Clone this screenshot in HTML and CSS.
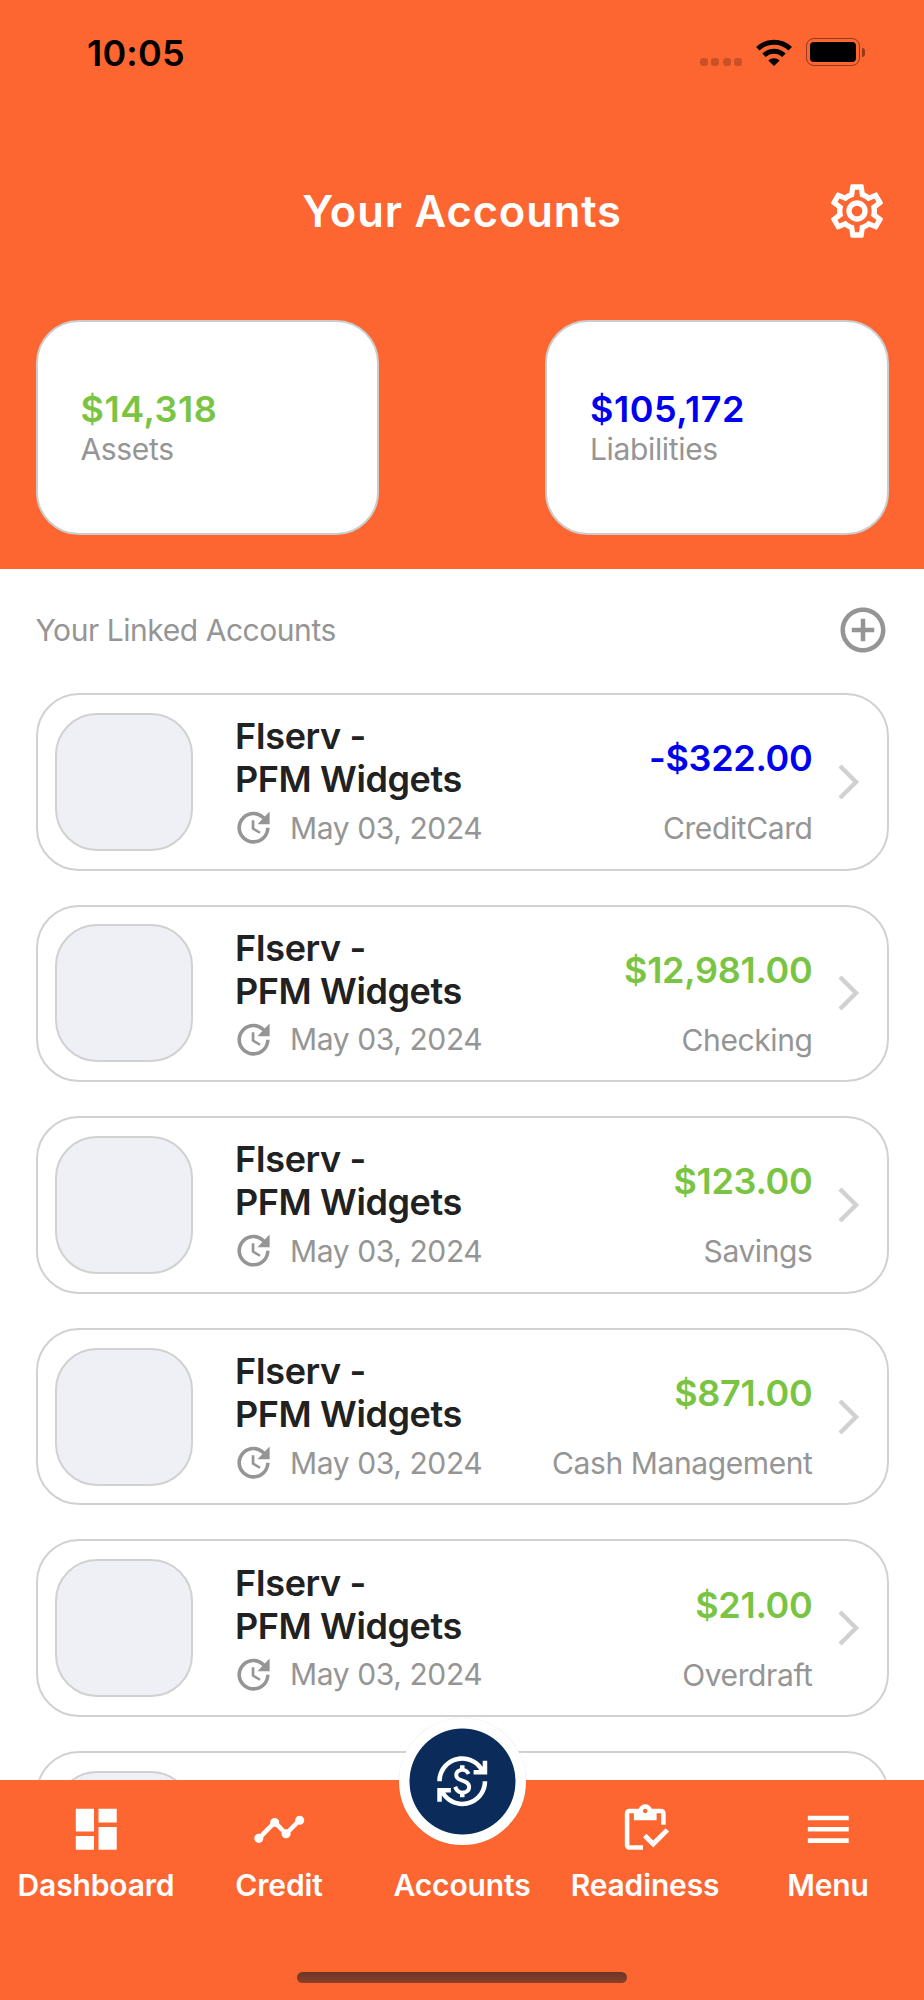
FILE: index.html
```html
<!DOCTYPE html>
<html lang="en">
<head>
    <meta charset="UTF-8">
    <meta name="viewport" content="width=device-width, initial-scale=1.0">
    <title>Your Accounts</title>
    <link rel="stylesheet" href="styles.css">
</head>
<body>
    <!-- shared icons -->
    <svg class="sprite">
        <symbol id="update" viewBox="0 0 24 24"><path d="M21,10.12H14.22L16.96,7.3C14.23,4.6 9.81,4.5 7.08,7.2C4.35,9.91 4.35,14.28 7.08,17C9.81,19.7 14.23,19.7 16.96,17C18.32,15.65 19,14.08 19,12.1H21C21,14.08 20.12,16.65 18.36,18.39C14.85,21.87 9.15,21.87 5.64,18.39C2.14,14.92 2.11,9.28 5.62,5.81C9.13,2.34 14.76,2.34 18.27,5.81L21,3V10.12M12.5,8V12.25L16,14.33L15.28,15.54L11,13V8H12.5Z"/></symbol>
        <symbol id="chevron" viewBox="0 0 22 36"><path d="M2 2L18 18L2 34" fill="none" stroke="#d1d1d1" stroke-width="4.4"/></symbol>
    </svg>

    <div class="screen">
        <header class="header">
            <div class="status">
                <span class="time">10:05</span>
                <div class="status-icons">
                    <div class="dots"><i></i><i></i><i></i><i></i></div>
                    <svg class="wifi" width="36" height="27" viewBox="0 0 36 27">
                        <g fill="none" stroke="#000" stroke-width="5">
                            <path d="M1.8 9.7A23.5 23.5 0 0 1 34.2 9.7"/>
                            <path d="M8 16.2A14.4 14.4 0 0 1 28 16.2"/>
                        </g>
                        <path d="M12.3 21.6A8.2 8.2 0 0 1 23.7 21.6L18 27Z"/>
                    </svg>
                    <div class="battery"><div class="level"></div></div>
                    <div class="nub"></div>
                </div>
            </div>
            <div class="title-bar">
                <h1>Your Accounts</h1>
                <svg class="gear" viewBox="0 0 24 24"><path d="M12,8A4,4 0 0,1 16,12A4,4 0 0,1 12,16A4,4 0 0,1 8,12A4,4 0 0,1 12,8M12,10A2,2 0 0,0 10,12A2,2 0 0,0 12,14A2,2 0 0,0 14,12A2,2 0 0,0 12,10M10,22C9.75,22 9.54,21.82 9.5,21.58L9.13,18.93C8.5,18.68 7.96,18.34 7.44,17.94L4.95,18.95C4.73,19.03 4.46,18.95 4.34,18.73L2.34,15.27C2.21,15.05 2.27,14.78 2.46,14.63L4.57,12.97L4.5,12L4.57,11L2.46,9.37C2.27,9.22 2.21,8.95 2.34,8.73L4.34,5.27C4.46,5.05 4.73,4.96 4.95,5.05L7.44,6.05C7.96,5.66 8.5,5.32 9.13,5.07L9.5,2.42C9.54,2.18 9.75,2 10,2H14C14.25,2 14.46,2.18 14.5,2.42L14.87,5.07C15.5,5.32 16.04,5.66 16.56,6.05L19.05,5.05C19.27,4.96 19.54,5.05 19.66,5.27L21.66,8.73C21.79,8.95 21.73,9.22 21.54,9.37L19.43,11L19.5,12L19.43,13L21.54,14.63C21.73,14.78 21.79,15.05 21.66,15.27L19.66,18.73C19.54,18.95 19.27,19.04 19.05,18.95L16.56,17.95C16.04,18.34 15.5,18.68 14.87,18.93L14.5,21.58C14.46,21.82 14.25,22 14,22H10M11.25,4L10.88,6.61C9.68,6.86 8.62,7.5 7.85,8.39L5.44,7.35L4.69,8.65L6.8,10.2C6.4,11.37 6.4,12.64 6.8,13.8L4.68,15.36L5.43,16.66L7.86,15.62C8.63,16.5 9.68,17.14 10.87,17.38L11.24,20H12.76L13.13,17.39C14.32,17.14 15.37,16.5 16.14,15.62L18.57,16.66L19.32,15.36L17.2,13.81C17.6,12.64 17.6,11.37 17.2,10.2L19.31,8.65L18.56,7.35L16.15,8.39C15.38,7.5 14.32,6.86 13.12,6.62L12.75,4H11.25Z"/></svg>
            </div>
            <div class="summary">
                <div class="summary-card">
                    <div class="sum positive">$14,318</div>
                    <div class="sum-label">Assets</div>
                </div>
                <div class="summary-card">
                    <div class="sum negative">$105,172</div>
                    <div class="sum-label">Liabilities</div>
                </div>
            </div>
        </header>

        <main class="content">
            <div class="linked">
                <span>Your Linked Accounts</span>
                <svg class="add" viewBox="0 0 24 24"><path d="M13 7h-2v4H7v2h4v4h2v-4h4v-2h-4V7zm-1-5C6.48 2 2 6.48 2 12s4.48 10 10 10 10-4.48 10-10S17.52 2 12 2zm0 18c-4.41 0-8-3.59-8-8s3.59-8 8-8 8 3.59 8 8-3.59 8-8 8z"/></svg>
            </div>

            <div class="accounts">
                <div class="account">
                    <div class="logo"></div>
                    <div class="info">
                        <div class="name">FIserv -<br>PFM Widgets</div>
                        <div class="date"><svg><use href="#update"/></svg>May 03, 2024</div>
                    </div>
                    <div class="balance">
                        <div class="amount negative">-$322.00</div>
                        <div class="type">CreditCard</div>
                    </div>
                    <svg class="chevron"><use href="#chevron"/></svg>
                </div>
                <div class="account">
                    <div class="logo"></div>
                    <div class="info">
                        <div class="name">FIserv -<br>PFM Widgets</div>
                        <div class="date"><svg><use href="#update"/></svg>May 03, 2024</div>
                    </div>
                    <div class="balance">
                        <div class="amount positive">$12,981.00</div>
                        <div class="type">Checking</div>
                    </div>
                    <svg class="chevron"><use href="#chevron"/></svg>
                </div>
                <div class="account">
                    <div class="logo"></div>
                    <div class="info">
                        <div class="name">FIserv -<br>PFM Widgets</div>
                        <div class="date"><svg><use href="#update"/></svg>May 03, 2024</div>
                    </div>
                    <div class="balance">
                        <div class="amount positive">$123.00</div>
                        <div class="type">Savings</div>
                    </div>
                    <svg class="chevron"><use href="#chevron"/></svg>
                </div>
                <div class="account">
                    <div class="logo"></div>
                    <div class="info">
                        <div class="name">FIserv -<br>PFM Widgets</div>
                        <div class="date"><svg><use href="#update"/></svg>May 03, 2024</div>
                    </div>
                    <div class="balance">
                        <div class="amount positive">$871.00</div>
                        <div class="type">Cash Management</div>
                    </div>
                    <svg class="chevron"><use href="#chevron"/></svg>
                </div>
                <div class="account">
                    <div class="logo"></div>
                    <div class="info">
                        <div class="name">FIserv -<br>PFM Widgets</div>
                        <div class="date"><svg><use href="#update"/></svg>May 03, 2024</div>
                    </div>
                    <div class="balance">
                        <div class="amount positive">$21.00</div>
                        <div class="type">Overdraft</div>
                    </div>
                    <svg class="chevron"><use href="#chevron"/></svg>
                </div>
                <div class="account">
                    <div class="logo"></div>
                </div>
            </div>
        </main>

        <nav class="tabs">
            <div class="tab">
                <svg viewBox="0 0 24 24"><path d="M3 13h8V3H3v10zm0 8h8v-6H3v6zm10 0h8V11h-8v10zm0-18v6h8V3h-8z"/></svg>
                <span>Dashboard</span>
            </div>
            <div class="tab">
                <svg viewBox="0 0 24 24"><path d="M23 8c0 1.1-.9 2-2 2-.18 0-.35-.02-.51-.07l-3.56 3.55c.05.16.07.34.07.52 0 1.1-.9 2-2 2s-2-.9-2-2c0-.18.02-.36.07-.52l-2.55-2.55c-.16.05-.34.07-.52.07s-.36-.02-.52-.07l-4.55 4.56c.05.16.07.33.07.51 0 1.1-.9 2-2 2s-2-.9-2-2 .9-2 2-2c.18 0 .35.02.51.07l4.56-4.55C8.02 9.36 8 9.18 8 9c0-1.1.9-2 2-2s2 .9 2 2c0 .18-.02.36-.07.52l2.55 2.55c.16-.05.34-.07.52-.07s.36.02.52.07l3.55-3.56C19.02 8.35 19 8.18 19 8c0-1.1.9-2 2-2s2 .9 2 2z"/></svg>
                <span>Credit</span>
            </div>
            <div class="tab active">
                <div class="bubble">
                    <svg viewBox="0 0 24 24"><path d="M12.89 11.1c-1.78-.59-2.64-.96-2.64-1.9 0-1.02 1.11-1.39 1.81-1.39 1.31 0 1.79.99 1.9 1.34l1.58-.67C15.39 8.03 14.72 6.56 13 6.24V5h-2v1.26C8.52 6.82 8.51 9.12 8.51 9.22c0 2.27 2.25 2.91 3.35 3.31 1.58.56 2.28 1.07 2.28 2.03 0 1.13-1.05 1.61-1.98 1.61-1.82 0-2.34-1.87-2.4-2.09l-1.66.67c.63 2.19 2.28 2.78 2.9 2.96V19h2v-1.24c.4-.09 2.9-.59 2.9-3.22 0-1.39-.61-2.61-3.01-3.44zM3 21H1v-6h6v2H4.52C6.12 19.4 8.88 21 12 21c4.97 0 9-4.03 9-9h2c0 6.08-4.92 11-11 11-3.72 0-7.01-1.85-9-4.67V21zM1 12C1 5.92 5.92 1 12 1c3.72 0 7.01 1.85 9 4.67V3h2v6h-6V7h2.48C17.88 4.6 15.12 3 12 3c-4.97 0-9 4.03-9 9H1z"/></svg>
                </div>
                <span>Accounts</span>
            </div>
            <div class="tab">
                <svg viewBox="0 0 24 24"><path d="M5 5h2v3h10V5h2v5h2V5c0-1.1-.9-2-2-2h-4.18C14.4 1.84 13.3 1 12 1S9.6 1.84 9.18 3H5c-1.1 0-2 .9-2 2v14c0 1.1.9 2 2 2h6v-2H5V5zm7-2c.55 0 1 .45 1 1s-.45 1-1 1-1-.45-1-1 .45-1 1-1z"/><path d="M20.95 11.6L15.5 17l-3-3L11 15.5l4.5 4.5 7-7z"/></svg>
                <span>Readiness</span>
            </div>
            <div class="tab">
                <svg viewBox="0 0 24 24"><path d="M3 18h18v-2H3v2zm0-5h18v-2H3v2zm0-7v2h18V6H3z"/></svg>
                <span>Menu</span>
            </div>
            <div class="home-indicator"></div>
        </nav>
    </div>
</body>
</html>
```
FILE: styles.css
```css
* {
    box-sizing: border-box;
}
body {
    margin: 0;
    font-family: "Inter", "Liberation Sans", sans-serif;
}
.sprite {
    display: none;
}
.screen {
    width: 924px;
    height: 2000px;
    display: flex;
    flex-direction: column;
    overflow: hidden;
    background-color: #fff;
}

/* header */
.header {
    height: 568.5px;
    flex-shrink: 0;
    background-color: #fd6630;
}
.status {
    display: flex;
    justify-content: space-between;
    height: 106px;
    padding: 31px 59px 0 87px;
}
.time {
    font-size: 36px;
    font-weight: 600;
    line-height: 44px;
    letter-spacing: 0.2px;
}
.status-icons {
    display: flex;
    align-items: flex-start;
    padding-top: 7px;
}
.dots {
    display: flex;
    gap: 3.6px;
    margin: 20px 14px 0 0;
}
.dots i {
    width: 7.8px;
    height: 8px;
    border-radius: 3px;
    background-color: rgba(0, 0, 0, 0.2);
}
.wifi {
    margin: 1px 14px 0 0;
}
.battery {
    width: 54px;
    height: 28px;
    padding: 3px;
    border: 1.5px solid rgba(0, 0, 0, 0.42);
    border-radius: 8px;
}
.level {
    height: 20px;
    border-radius: 4px;
    background-color: #000;
}
.nub {
    width: 3px;
    height: 9px;
    margin: 10px 0 0 2px;
    border-radius: 0 4px 4px 0;
    background-color: rgba(0, 0, 0, 0.42);
}
.title-bar {
    position: relative;
    height: 214px;
    display: flex;
    justify-content: center;
    align-items: center;
}
h1 {
    margin: 0 0 4px;
    color: #fff;
    font-size: 43.5px;
    font-weight: 600;
    line-height: 52px;
    letter-spacing: 0.85px;
}
.gear {
    position: absolute;
    right: 35px;
    top: 73px;
    width: 64px;
    height: 64px;
    fill: #fff;
}
.summary {
    display: flex;
    justify-content: space-between;
    padding: 0 35.5px;
}
.summary-card {
    width: 343.5px;
    height: 215px;
    padding: 66px 43px 0;
    border: 2px solid #ccc;
    border-radius: 43px;
    background-color: #fff;
}
.sum {
    font-size: 36px;
    font-weight: 600;
    line-height: 43px;
    letter-spacing: 0.5px;
}
.sum-label {
    color: #959595;
    font-size: 30px;
    line-height: 36px;
    letter-spacing: -0.35px;
}
.positive {
    color: #7ac443;
}
.negative {
    color: #0000f0;
}

/* account list */
.content {
    flex: 1;
    min-height: 0;
    padding: 0 35.5px;
}
.linked {
    display: flex;
    justify-content: space-between;
    align-items: center;
    height: 124.5px;
    padding-bottom: 1px;
    color: #959595;
    font-size: 30px;
    letter-spacing: -0.45px;
}
.add {
    width: 54px;
    height: 54px;
    margin-right: -1px;
    fill: #959595;
}
.accounts {
    display: flex;
    flex-direction: column;
    gap: 34px;
}
.account {
    display: flex;
    align-items: center;
    height: 177.6px;
    padding: 0 27px 0 17.5px;
    border: 2px solid #d1d1d1;
    border-radius: 43px;
}
.logo {
    width: 138px;
    height: 138px;
    border: 2px solid #d1d1d1;
    border-radius: 42px;
    background-color: #eff0f5;
}
.info {
    margin-left: 42px;
    white-space: nowrap;
}
.name {
    padding-top: 1px;
    color: #212121;
    font-size: 36px;
    font-weight: 600;
    line-height: 43px;
    letter-spacing: -0.4px;
}
.date {
    display: flex;
    align-items: center;
    height: 43px;
    margin-top: 5px;
    color: #959595;
    font-size: 30px;
    letter-spacing: -0.4px;
}
.date svg {
    width: 43px;
    height: 43px;
    margin: 0 15px 0 -3px;
    fill: #959595;
}
.balance {
    flex: 1;
    text-align: right;
    padding-top: 24px;
    white-space: nowrap;
}
.amount {
    font-size: 36px;
    font-weight: 600;
    line-height: 43px;
    letter-spacing: -0.3px;
}
.type {
    margin-top: 27px;
    color: #959595;
    font-size: 30px;
    line-height: 43px;
    letter-spacing: -0.4px;
}
.chevron {
    width: 22px;
    height: 36px;
    margin-left: 25px;
}

/* bottom bar */
.tabs {
    position: relative;
    display: grid;
    grid-template-columns: repeat(5, 1fr);
    height: 220px;
    flex-shrink: 0;
    padding: 22px 4.5px 0;
    background-color: #fd6630;
}
.tab {
    display: flex;
    flex-direction: column;
    align-items: center;
    color: #fff;
    font-size: 30px;
    font-weight: 600;
    line-height: 36px;
    letter-spacing: -0.15px;
}
.tab svg {
    width: 54.5px;
    height: 54.5px;
    margin-bottom: 10.5px;
    fill: #fff;
}
.bubble {
    display: flex;
    justify-content: center;
    align-items: center;
    width: 127px;
    height: 127px;
    margin: -84.5px 0 22.5px;
    border: 10.5px solid #fff;
    border-radius: 50%;
    background-color: #fff;
    background-image: radial-gradient(circle, #0b2b5a 52.5px, transparent 53.5px);
    background-origin: border-box;
    box-shadow: 0 0 1px rgba(0, 0, 0, 0.2);
}
.bubble svg {
    margin: 0;
}
.home-indicator {
    position: absolute;
    left: 297px;
    bottom: 17px;
    width: 330px;
    height: 11px;
    border-radius: 6px;
    background-image: linear-gradient(#6b3627, #8a3f29);
}
```
